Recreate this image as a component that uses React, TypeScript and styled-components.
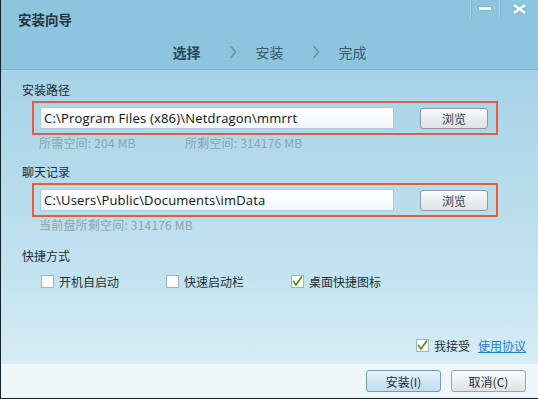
import React from 'react';
import styled, { createGlobalStyle } from 'styled-components';

const GlobalStyle = createGlobalStyle`
  html, body {
    margin: 0;
    padding: 0;
    background: #ffffff;
  }
  body {
    font-family: "Noto Sans CJK SC", "Noto Sans", sans-serif;
    font-size: 12px;
    color: #25343c;
  }
`;

const steps = ['选择', '安装', '完成'];
const shortcuts = [
  { label: '开机自启动', checked: false },
  { label: '快速启动栏', checked: false },
  { label: '桌面快捷图标', checked: true },
];

function CheckMark() {
  return (
    <svg width="11" height="11" viewBox="0 0 11 11">
      <path d="M1.5 5.5 L4 9 L9.5 1" fill="none" stroke="#4f9a1c" strokeWidth="1.8" strokeLinecap="round" strokeLinejoin="round" />
    </svg>
  );
}

function Chevron() {
  return (
    <ChevronWrap>
      <svg width="8" height="14" viewBox="0 0 8 14">
        <path d="M1.5 1 L6.5 7 L1.5 13" fill="none" stroke="#6b93a8" strokeWidth="1.6" />
      </svg>
    </ChevronWrap>
  );
}

function PathBox({ value }: { value: string }) {
  return (
    <RedBox>
      <PathInput>{value}</PathInput>
      <BrowseButton type="button">浏览</BrowseButton>
    </RedBox>
  );
}

export default function App() {
  return (
    <>
      <GlobalStyle />
      <Window>
        <Header>
          <TitleBar>
            <Title>安装向导</Title>
            <Controls>
              <CtrlButton $w={28}>
                <svg width="12" height="4" viewBox="0 0 12 4">
                  <rect x="0" y="0" width="12" height="3" fill="#ffffff" />
                </svg>
              </CtrlButton>
              <CtrlButton $w={38}>
                <svg width="13" height="10" viewBox="0 0 13 10">
                  <path d="M1 1 L12 9 M12 1 L1 9" stroke="#ffffff" strokeWidth="2.6" />
                </svg>
              </CtrlButton>
            </Controls>
          </TitleBar>
          <Steps>
            {steps.map((s, i) => (
              <React.Fragment key={s}>
                {i > 0 && <Chevron />}
                <Step $active={i === 0}>{s}</Step>
              </React.Fragment>
            ))}
          </Steps>
        </Header>

        <Body>
          <SectionLabel>安装路径</SectionLabel>
          <PathBox value="C:\Program Files (x86)\Netdragon\mmrrt" />
          <InfoRow>
            <InfoText $w={146}>所需空间: 204 MB</InfoText>
            <InfoText>所剩空间: 314176 MB</InfoText>
          </InfoRow>

          <SectionLabel $top={14}>聊天记录</SectionLabel>
          <PathBox value="C:\Users\Public\Documents\imData" />
          <InfoRow>
            <InfoText>当前盘所剩空间: 314176 MB</InfoText>
          </InfoRow>

          <SectionLabel $top={16}>快捷方式</SectionLabel>
          <CheckRow>
            {shortcuts.map((c) => (
              <CheckItem key={c.label}>
                <Box>{c.checked && <CheckMark />}</Box>
                <span>{c.label}</span>
              </CheckItem>
            ))}
          </CheckRow>

          <Spacer />
          <AcceptRow>
            <Box>
              <CheckMark />
            </Box>
            <span>我接受</span>
            <Link>使用协议</Link>
          </AcceptRow>
        </Body>

        <Footer>
          <DialogButton $primary type="button">安装(I)</DialogButton>
          <DialogButton type="button">取消(C)</DialogButton>
        </Footer>
      </Window>
    </>
  );
}

const Window = styled.div`
  width: 538px;
  height: 399px;
  box-sizing: border-box;
  display: flex;
  flex-direction: column;
  border-left: 1px solid #11222a;
  border-bottom: 1px solid #11222a;
  background: linear-gradient(#9ccde3, #c4e3f0 70%, #dff0f7);
  overflow: hidden;
`;

const Header = styled.div`
  height: 69px;
  flex-shrink: 0;
  background: #8dc5df;
  border-bottom: 1px solid #7db5cf;
  display: flex;
  flex-direction: column;
`;

const TitleBar = styled.div`
  height: 37px;
  display: flex;
  justify-content: space-between;
`;

const Title = styled.div`
  padding: 10px 0 0 17px;
  font-size: 13.5px;
  font-weight: bold;
  line-height: 18px;
  color: #26343c;
`;

const Controls = styled.div`
  display: flex;
  align-self: flex-start;
`;

const CtrlButton = styled.div<{ $w: number }>`
  width: ${(p) => p.$w}px;
  height: 18px;
  display: flex;
  align-items: center;
  justify-content: center;
  border-left: 1px solid #a9d3e6;
  box-shadow: inset 1px 0 0 #7fb6cf;
  svg {
    filter: drop-shadow(0 0 1px #6a9fb8);
  }
`;

const Steps = styled.div`
  flex: 1;
  display: flex;
  align-items: center;
  justify-content: center;
  padding-bottom: 2px;
`;

const ChevronWrap = styled.span`
  display: inline-flex;
  margin: 0 19px 0 28px;
`;

const Step = styled.span<{ $active?: boolean }>`
  font-size: 14px;
  font-weight: ${(p) => (p.$active ? 'bold' : 'normal')};
  color: ${(p) => (p.$active ? '#274657' : '#3c5a6a')};
`;

const Body = styled.div`
  flex: 1;
  display: flex;
  flex-direction: column;
  padding: 12px 12px 10px 21px;
`;

const SectionLabel = styled.div<{ $top?: number }>`
  margin-top: ${(p) => p.$top ?? 0}px;
  height: 16px;
  line-height: 16px;
  font-size: 12px;
  color: #1f2d34;
  margin-bottom: 3px;
`;

const RedBox = styled.div`
  margin-left: 10px;
  width: 466px;
  height: 34px;
  box-sizing: border-box;
  border: 2px solid #e0603c;
  display: flex;
  align-items: center;
  padding-left: 6px;
  gap: 26px;
`;

const PathInput = styled.div`
  width: 354px;
  height: 22px;
  box-sizing: border-box;
  border: 1px solid #a9cbdb;
  background: linear-gradient(#ffffff, #f1f7fb);
  padding-left: 3px;
  line-height: 20px;
  font-family: "Open Sans", "Noto Sans", sans-serif;
  font-size: 13px;
  letter-spacing: 0.2px;
  color: #111;
  white-space: nowrap;
  overflow: hidden;
`;

const BrowseButton = styled.button`
  width: 68px;
  height: 21px;
  padding: 0;
  border: 1px solid #8a9ba6;
  border-radius: 3px;
  background: linear-gradient(#fbfbfb, #e9ecee 55%, #dfe3e6);
  font-family: "Noto Sans CJK SC", sans-serif;
  font-size: 12px;
  color: #2a3d4a;
`;

const InfoRow = styled.div`
  display: flex;
  padding-left: 17px;
  height: 15px;
  line-height: 15px;
`;

const InfoText = styled.span<{ $w?: number }>`
  width: ${(p) => (p.$w ? `${p.$w}px` : 'auto')};
  font-size: 12px;
  letter-spacing: 0.2px;
  color: #8ea4ae;
`;

const CheckRow = styled.div`
  display: flex;
  padding-left: 19px;
  margin-top: 6px;
`;

const CheckItem = styled.label`
  width: 125px;
  display: flex;
  align-items: center;
  gap: 5px;
  font-size: 12px;
  color: #1f2d34;
`;

const Box = styled.span`
  width: 13px;
  height: 13px;
  box-sizing: border-box;
  border: 1px solid #9ab5c2;
  background: #ffffff;
  display: inline-flex;
  align-items: center;
  justify-content: center;
`;

const Spacer = styled.div`
  flex: 1;
`;

const AcceptRow = styled.div`
  display: flex;
  align-items: center;
  justify-content: flex-end;
  gap: 5px;
  font-size: 12px;
  color: #1f2d34;
`;

const Link = styled.a`
  margin-left: 3px;
  color: #1f7fd4;
  text-decoration: underline;
  cursor: pointer;
`;

const Footer = styled.div`
  height: 34px;
  flex-shrink: 0;
  background: #eff7fb;
  display: flex;
  align-items: center;
  justify-content: flex-end;
  gap: 10px;
  padding-right: 12px;
`;

const DialogButton = styled.button<{ $primary?: boolean }>`
  width: 75px;
  height: 22px;
  padding: 0;
  border-radius: 3px;
  border: 1px solid ${(p) => (p.$primary ? '#6f9fbe' : '#9aa3a8')};
  background: ${(p) =>
    p.$primary
      ? 'linear-gradient(#e6f3fb, #cfe7f5 55%, #bfdef0)'
      : 'linear-gradient(#fbfbfb, #eceeef 55%, #e0e3e5)'};
  font-family: "Noto Sans CJK SC", sans-serif;
  font-size: 12px;
  color: #1f2d34;
`;
